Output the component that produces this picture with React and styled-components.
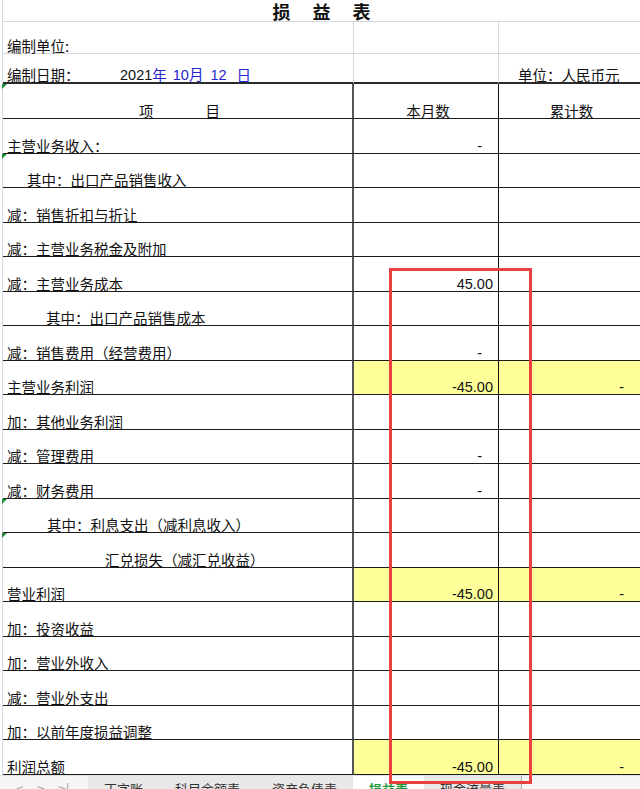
import styled, { createGlobalStyle } from 'styled-components'

const GlobalStyle = createGlobalStyle`
    html, body {
        margin: 0;
        padding: 0;
        background: #fff;
        overflow: hidden;
    }
    body {
        font-family: "Noto Sans CJK SC", "Noto Sans", sans-serif;
        color: #111;
    }
`

const GRID = '#d4d8de'

const Page = styled.div`
    position: relative;
    width: 640px;
    height: 789px;
    overflow: hidden;
`
const Sheet = styled.div`
    display: grid;
    grid-template-columns: 351px 145px 1fr;
    grid-template-rows: 22px 32px 30px 35px repeat(19, 34.5px);
    margin-left: 2px;
    border-left: 1px solid ${GRID};
`
const Title = styled.div`
    grid-column: 1 / -1;
    display: flex;
    justify-content: center;
    align-items: flex-end;
    padding-left: 22px;
    border-bottom: 1px solid ${GRID};
    box-sizing: border-box;
    font-size: 18px;
    font-weight: 700;
    line-height: 20px;
    letter-spacing: 22px;
`
const Cell = styled.div`
    position: relative;
    box-sizing: border-box;
    display: flex;
    align-items: flex-end;
    justify-content: ${(p) => (p.$align === 'right' ? 'flex-end' : p.$align === 'center' ? 'center' : 'flex-start')};
    padding: 0 ${(p) => p.$pr || 0}px 0 ${(p) => 4 + (p.$indent || 0)}px;
    font-size: 14.5px;
    line-height: 14px;
    white-space: nowrap;
    background: ${(p) => (p.$fill ? '#ffff99' : 'transparent')};
    border-right: ${(p) =>
        p.$col === 2
            ? 'none'
            : p.$info
            ? `1px solid ${GRID}`
            : p.$col === 0
            ? '2px solid #555'
            : '1px solid #111'};
    border-bottom: ${(p) =>
        p.$info === 'top' ? `1px solid ${GRID}` : p.$info === 'date' ? '2px solid #2a2a2a' : '1px solid #1c1c1c'};

    ${(p) =>
        p.$flag &&
        `&::before {
            content: '';
            position: absolute;
            top: 0;
            left: -1px;
            border-top: 5px solid #1f8f3c;
            border-right: 5px solid transparent;
        }`}
`
const DateLabel = styled.span`
    display: inline-block;
    width: 113px;
`
const Blue = styled.span`
    color: #2424d0;
    margin-left: ${(p) => p.$gap || 0}px;
`
const Num = styled.span`
    font-family: "Liberation Sans", Arial, sans-serif;
    font-size: 14.5px;
    margin-left: ${(p) => p.$gap || 0}px;
`
const HeadWord = styled.span`
    & + & {
        margin-left: 52px;
    }
`
const Marker = styled.div`
    position: absolute;
    left: 389px;
    top: 268px;
    width: 143px;
    height: 516px;
    box-sizing: border-box;
    border: 3px solid #e8413f;
    pointer-events: none;
`
const TabBar = styled.div`
    display: flex;
    height: 26px;
    background: #f5f5f5;
    border-top: 1px solid #e2e2e2;
    box-sizing: border-box;
    font-size: 13px;
    line-height: 16px;
`
const Nav = styled.div`
    display: flex;
    gap: 14px;
    width: 88px;
    box-sizing: border-box;
    padding: 5px 0 0 16px;
    color: #9a9a9a;
`
const Tab = styled.div`
    padding: 5px 16px 0;
    background: ${(p) => (p.$active ? '#fff' : '#e8e8e8')};
    color: ${(p) => (p.$active ? '#1d9b3b' : '#333')};
    font-weight: ${(p) => (p.$active ? 700 : 400)};
    border-right: ${(p) => (p.$last ? '1px solid #aaa' : 'none')};
`

const rows = [
    { label: '主营业务收入：', month: '-' },
    { label: '其中：出口产品销售收入', indent: 20, flag: true },
    { label: '减：销售折扣与折让' },
    { label: '减：主营业务税金及附加' },
    { label: '减：主营业务成本', month: '45.00' },
    { label: '其中：出口产品销售成本', indent: 39 },
    { label: '减：销售费用（经营费用）', month: '-' },
    { label: '主营业务利润', month: '-45.00', total: '-', hl: true },
    { label: '加：其他业务利润' },
    { label: '减：管理费用', month: '-' },
    { label: '减：财务费用', month: '-' },
    { label: '其中：利息支出（减利息收入）', indent: 40, flag: true },
    { label: '汇兑损失（减汇兑收益）', indent: 98, flag: true },
    { label: '营业利润', month: '-45.00', total: '-', hl: true },
    { label: '加：投资收益' },
    { label: '加：营业外收入' },
    { label: '减：营业外支出' },
    { label: '加：以前年度损益调整' },
    { label: '利润总额', month: '-45.00', total: '-', hl: true },
]

const tabs = ['丁字账', '科目余额表', '资产负债表', '损益表', '现金流量表']

const Value = ({ col, value, fill }) => (
    <Cell $col={col} $align="right" $pr={value === '-' ? 16 : 5} $fill={fill}>
        {value ? <Num>{value}</Num> : null}
    </Cell>
)

const App = () => {
    return (
        <Page>
            <GlobalStyle />
            <Sheet>
                <Title>损益表</Title>

                <Cell $col={0} $info="top">编制单位:</Cell>
                <Cell $col={1} $info="top" />
                <Cell $col={2} $info="top" />

                <Cell $col={0} $info="date">
                    <DateLabel>编制日期：</DateLabel>
                    <Num>2021</Num>
                    <Blue>年</Blue>
                    <Blue $gap={6}><Num>10</Num>月</Blue>
                    <Blue $gap={7}><Num>12</Num></Blue>
                    <Blue $gap={10}>日</Blue>
                </Cell>
                <Cell $col={1} $info="date" />
                <Cell $col={2} $info="date" $indent={15}>单位：人民币元</Cell>

                <Cell $col={0} $align="center" $flag>
                    <HeadWord>项</HeadWord>
                    <HeadWord>目</HeadWord>
                </Cell>
                <Cell $col={1} $align="center">本月数</Cell>
                <Cell $col={2} $align="center">累计数</Cell>

                {rows.map((r) => (
                    <>
                        <Cell key={r.label} $col={0} $indent={r.indent} $flag={r.flag}>
                            {r.label}
                        </Cell>
                        <Value col={1} value={r.month} fill={r.hl} />
                        <Value col={2} value={r.total} fill={r.hl} />
                    </>
                ))}
            </Sheet>
            <TabBar>
                <Nav>
                    <span>&lt;</span>
                    <span>&gt;</span>
                    <span>&gt;|</span>
                </Nav>
                {tabs.map((t, i) => (
                    <Tab key={t} $active={t === '损益表'} $last={i === tabs.length - 1}>
                        {t}
                    </Tab>
                ))}
            </TabBar>
            <Marker />
        </Page>
    )
}

export default App
